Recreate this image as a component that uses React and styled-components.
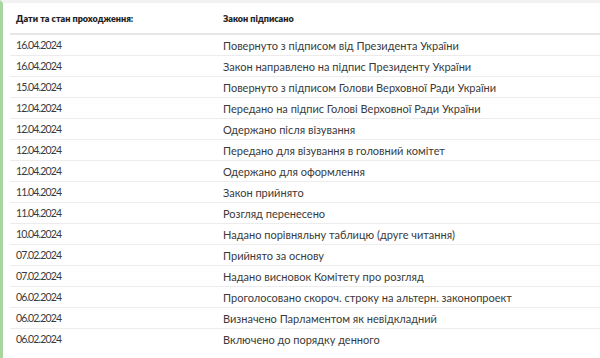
import React from "react";
import styled, { createGlobalStyle } from "styled-components";

const Global = createGlobalStyle`
  html, body { margin: 0; padding: 0; background: #fff; }
  body { font-family: Lato, "Open Sans", sans-serif; color: #333; }
`;

const Page = styled.div`
  width: 600px;
  height: 358px;
  overflow: hidden;
  box-sizing: border-box;
  border-left: 3px solid #a9d6a0;
  border-top: 3px solid #f1f1f1;
  padding-left: 7px;
`;

const Table = styled.div`
  display: flex;
  flex-direction: column;
`;

const Row = styled.div`
  display: grid;
  grid-template-columns: 207px 1fr;
  height: ${(p) => (p.$head ? "30px" : "20px")};
  align-items: center;
  border-bottom: ${(p) => (p.$head ? "2px solid #e6e6e6" : p.$last ? "none" : "1px solid #ececec")};
  font-size: ${(p) => (p.$head ? "9px" : "11px")};
  font-weight: ${(p) => (p.$head ? 800 : 400)};
  color: ${(p) => (p.$head ? "#1e1e1e" : "#3a3a3a")};
`;

const Cell = styled.div`
  padding-left: 6px;
  white-space: nowrap;
`;

const DateCell = styled(Cell)`
  font-size: 10.5px;
  letter-spacing: -0.85px;
`;

const rows = [
  ["16.04.2024", "Повернуто з підписом від Президента України"],
  ["16.04.2024", "Закон направлено на підпис Президенту України"],
  ["15.04.2024", "Повернуто з підписом Голови Верховної Ради України"],
  ["12.04.2024", "Передано на підпис Голові Верховної Ради України"],
  ["12.04.2024", "Одержано після візування"],
  ["12.04.2024", "Передано для візування в головний комітет"],
  ["12.04.2024", "Одержано для оформлення"],
  ["11.04.2024", "Закон прийнято"],
  ["11.04.2024", "Розгляд перенесено"],
  ["10.04.2024", "Надано порівняльну таблицю (друге читання)"],
  ["07.02.2024", "Прийнято за основу"],
  ["07.02.2024", "Надано висновок Комітету про розгляд"],
  ["06.02.2024", "Проголосовано скороч. строку на альтерн. законопроект"],
  ["06.02.2024", "Визначено Парламентом як невідкладний"],
  ["06.02.2024", "Включено до порядку денного"],
];

export default function App() {
  return (
    <>
      <Global />
      <Page>
        <Table>
          <Row $head>
            <Cell>Дати та стан проходження:</Cell>
            <Cell>Закон підписано</Cell>
          </Row>
          {rows.map(([d, t], i) => (
            <Row key={i} $last={i === rows.length - 1}>
              <DateCell>{d}</DateCell>
              <Cell>{t}</Cell>
            </Row>
          ))}
        </Table>
      </Page>
    </>
  );
}
